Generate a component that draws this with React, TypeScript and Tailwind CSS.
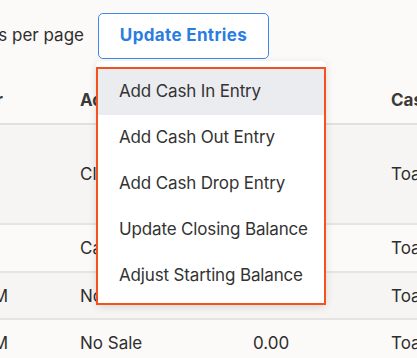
import React from "react";

const rows = [
  { h: "h-[100px]", bg: "bg-[#f6f5f4]", t: "", a: "Close Out", v: "0.00", c: "Toast" },
  { h: "h-[48px]", bg: "bg-[#fcfaf8]", t: "", a: "Cash In", v: "0.00", c: "Toast" },
  { h: "h-[47px]", bg: "bg-[#f6f5f4]", t: "12:05 PM", a: "No Sale", v: "0.00", c: "Toast" },
  { h: "h-[48px]", bg: "bg-[#fcfaf8]", t: "12:04 PM", a: "No Sale", v: "0.00", c: "Toast" },
];

const items = [
  "Add Cash In Entry",
  "Add Cash Out Entry",
  "Add Cash Drop Entry",
  "Update Closing Balance",
  "Adjust Starting Balance",
];

export default function App() {
  return (
    <div
      className="relative w-[417px] h-[358px] overflow-hidden bg-[#fcfaf8] text-[17px] text-[#2e2e2e]"
      style={{ fontFamily: "Inter, 'Noto Sans', sans-serif" }}
    >
      <div className="flex items-center mt-[13px] h-[46px]">
        <div className="w-[84px] overflow-hidden flex justify-end whitespace-nowrap shrink-0">
          <span>Show 10 entries per page</span>
        </div>
        <button className="ml-[14px] w-[171px] h-[46px] shrink-0 rounded-[5px] border-[1.5px] border-[#3d8ae8] bg-white font-bold text-[#2a7de1] tracking-[0.35px]">
          Update Entries
        </button>
      </div>

      <div className="mt-[18px] w-[600px]">
        <div className="flex items-center h-[48px] pt-[1px] font-bold text-[#3a3a3a] border-b-2 border-[#e2e0de]">
          <div className="w-[80px] shrink-0">
            <div className="w-[3px] overflow-hidden flex justify-end whitespace-nowrap">
              <span>Timer</span>
            </div>
          </div>
          <div className="w-[173px] shrink-0">Action</div>
          <div className="w-[138px] shrink-0">Amount</div>
          <div className="shrink-0">Cash Drawer</div>
        </div>
        {rows.map((r, i) => (
          <div
            key={i}
            className={`flex items-center ${r.h} ${r.bg} pt-[2px] border-b-2 border-[#e6e4e2]`}
          >
            <div className="w-[80px] shrink-0">
              <div className="w-[8px] overflow-hidden flex justify-end whitespace-nowrap">
                <span>{r.t}</span>
              </div>
            </div>
            <div className="w-[173px] shrink-0 whitespace-nowrap">{r.a}</div>
            <div className="w-[138px] shrink-0">{r.v}</div>
            <div className="shrink-0 whitespace-nowrap">{r.c}</div>
          </div>
        ))}
      </div>

      <div className="absolute left-[96px] top-[61px] w-[230px] bg-white rounded-[5px] pt-[6px] shadow-[0_2px_8px_rgba(0,0,0,0.12)]">
        <ul className="border-2 border-[#f4511e] pb-[4px]">
          {items.map((t, i) => (
            <li
              key={t}
              className={`flex items-center h-[46px] pl-[21px] whitespace-nowrap text-[#333333] tracking-[-0.15px] ${
                i === 0 ? "bg-[#ebecf0]" : ""
              }`}
            >
              {t}
            </li>
          ))}
        </ul>
      </div>
    </div>
  );
}
